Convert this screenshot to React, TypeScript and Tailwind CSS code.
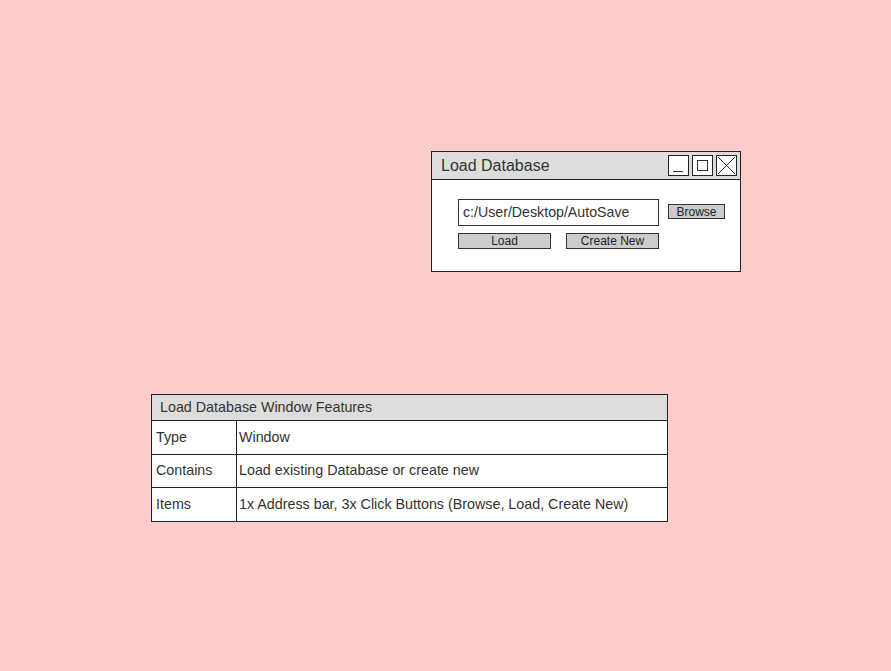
import React from 'react';

const font = { fontFamily: '"Liberation Sans", Arial, sans-serif' };

function TitleButton({ kind }: { kind: 'min' | 'max' | 'close' }) {
  return (
    <div className="w-[21px] h-[21px] bg-white border border-[#222] flex items-center justify-center">
      <svg width="19" height="19" viewBox="0 0 19 19" fill="none" stroke="#333" strokeWidth="1">
        {kind === 'min' && <path d="M4 15.5h10" />}
        {kind === 'max' && <rect x="4.5" y="4.5" width="10" height="10" />}
        {kind === 'close' && <path d="M1 1l17 17M18 1L1 18" />}
      </svg>
    </div>
  );
}

function LoadWindow() {
  return (
    <div className="absolute left-[431px] top-[151px] w-[310px] h-[121px] bg-white border border-[#222] flex flex-col">
      <div className="h-[28px] bg-[#dddddd] border-b border-[#222] flex items-center pl-[9px] pr-[3px]">
        <span className="text-[16px] text-[#333] flex-1">Load Database</span>
        <div className="flex gap-[3px]">
          <TitleButton kind="min" />
          <TitleButton kind="max" />
          <TitleButton kind="close" />
        </div>
      </div>
      <div className="pl-[26px] pt-[19px] flex flex-col gap-[7px]">
        <div className="flex items-start gap-[9px]">
          <div className="w-[201px] h-[27px] border border-[#333] flex items-center pl-[4px] text-[14.2px] text-[#333]">
            c:/User/Desktop/AutoSave
          </div>
          <div className="mt-[5px] w-[57px] h-[15px] bg-[#cccccc] border border-[#333] flex items-center justify-center text-[12px] leading-none text-[#222]">
            Browse
          </div>
        </div>
        <div className="flex gap-[15px]">
          <div className="w-[93px] h-[16px] bg-[#cccccc] border border-[#333] flex items-center justify-center text-[12px] leading-none text-[#222]">
            Load
          </div>
          <div className="w-[93px] h-[16px] bg-[#cccccc] border border-[#333] flex items-center justify-center text-[12px] leading-none text-[#222]">
            Create New
          </div>
        </div>
      </div>
    </div>
  );
}

const rows = [
  { key: 'Type', value: 'Window', h: 'h-[34px]' },
  { key: 'Contains', value: 'Load existing Database or create new', h: 'h-[33px]' },
  { key: 'Items', value: '1x Address bar, 3x Click Buttons (Browse, Load, Create New)', h: 'h-[33px]' },
];

function FeatureTable() {
  return (
    <div className="absolute left-[151px] top-[394px] w-[517px] bg-white border border-[#222] text-[14.3px] text-[#333]">
      <div className="h-[26px] bg-[#dddddd] border-b border-[#222] flex items-center pl-[8px]">
        Load Database Window Features
      </div>
      {rows.map((r, i) => (
        <div
          key={r.key}
          className={`flex ${r.h} ${i < rows.length - 1 ? 'border-b border-[#222]' : ''}`}
        >
          <div className="w-[85px] border-r border-[#222] flex items-center pl-[4px]">{r.key}</div>
          <div className="flex-1 flex items-center pl-[2px]">{r.value}</div>
        </div>
      ))}
    </div>
  );
}

export default function App() {
  return (
    <div className="relative w-[891px] h-[671px] bg-[#ffcccc] overflow-hidden" style={font}>
      <LoadWindow />
      <FeatureTable />
    </div>
  );
}
